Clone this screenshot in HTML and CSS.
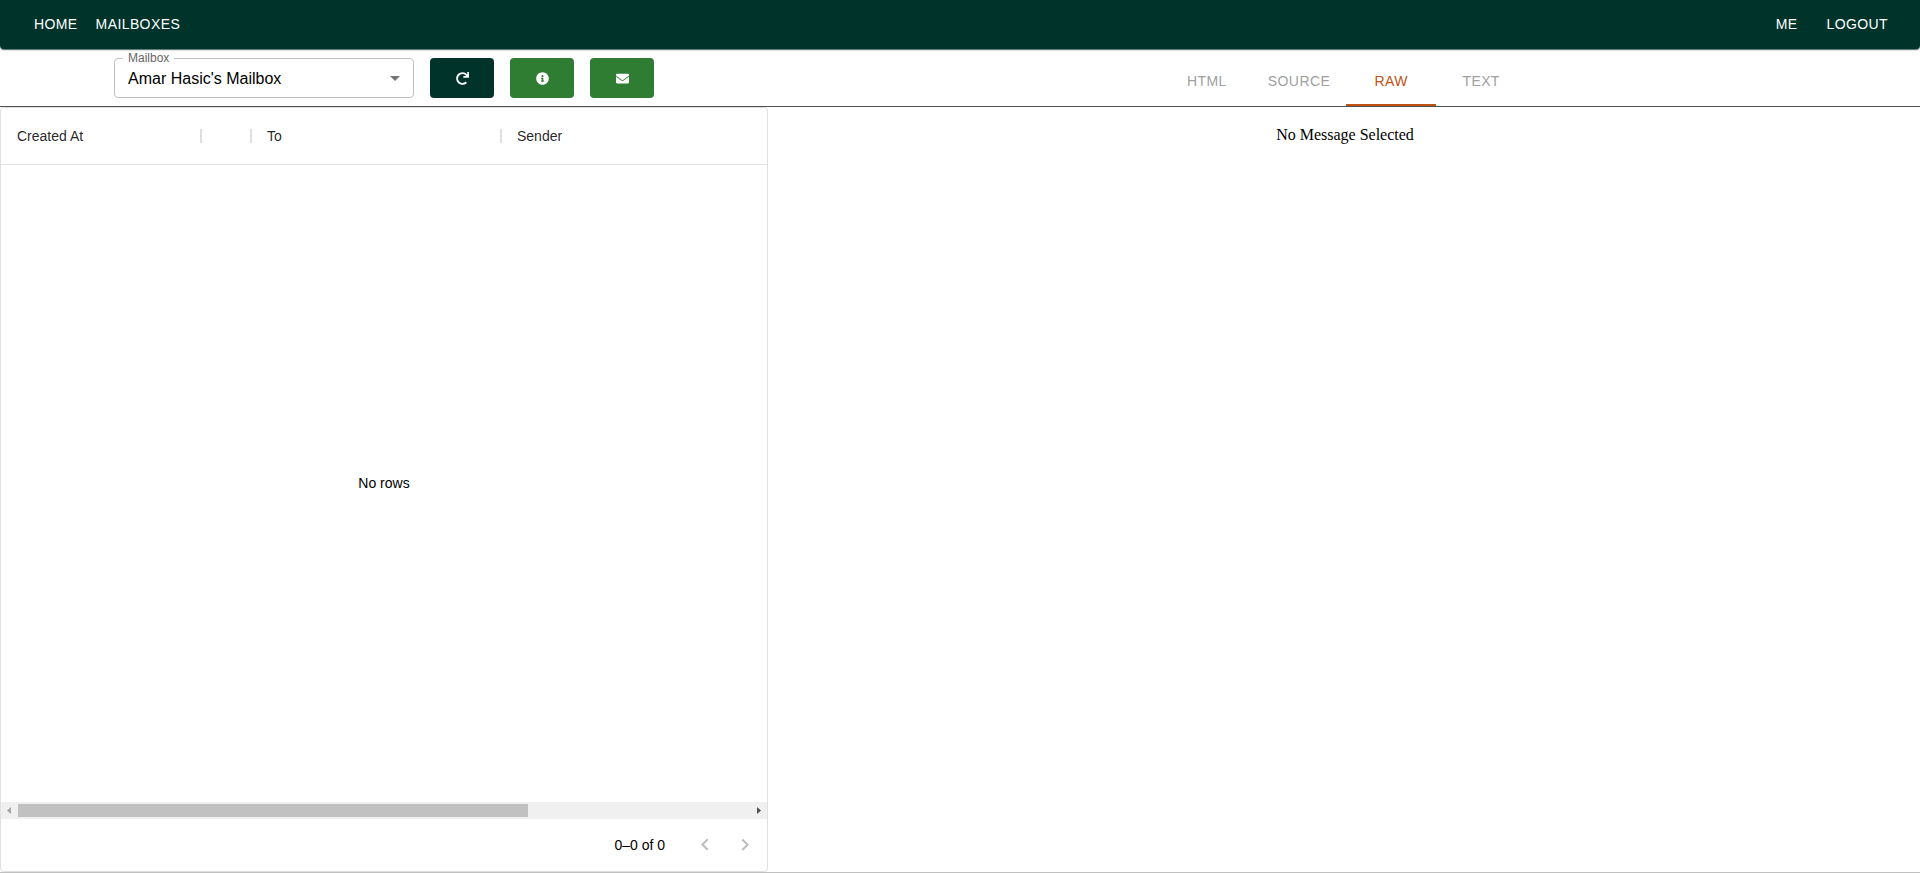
FILE: index.html
```html
<!DOCTYPE html>
<html lang="en">
<head>
<meta charset="utf-8">
<title>Mailboxes</title>
<link rel="stylesheet" href="styles.css">
</head>
<body>
<div class="page">
  <header class="appbar">
    <nav class="nav nav-main">
      <a href="#home">HOME</a>
      <a href="#mailboxes">MAILBOXES</a>
    </nav>
    <nav class="nav nav-user">
      <a href="#me">ME</a>
      <a href="#logout">LOGOUT</a>
    </nav>
  </header>

  <div class="toolbar">
    <div class="mailbox-tools">
      <div class="field">
        <select id="mailbox" class="field-select">
          <option>Amar Hasic's Mailbox</option>
        </select>
        <label class="field-label" for="mailbox">Mailbox</label>
        <svg class="field-arrow" viewBox="0 0 24 24" aria-hidden="true"><path d="M7 10l5 5 5-5z"/></svg>
      </div>
      <button class="tool tool-dark" type="button" aria-label="Refresh">
        <svg viewBox="0 0 512 512"><path d="M500.33 0h-47.41a12 12 0 0 0-12 12.57l4 82.76A247.42 247.42 0 0 0 256 8C119.34 8 7.9 119.53 8 256.19 8.1 393.07 119.1 504 256 504a247.1 247.1 0 0 0 166.18-63.91 12 12 0 0 0 .48-17.43l-34-34a12 12 0 0 0-16.38-.55A176 176 0 1 1 402.1 157.8l-101.53-4.87a12 12 0 0 0-12.57 12v47.41a12 12 0 0 0 12 12h200.33a12 12 0 0 0 12-12V12a12 12 0 0 0-12-12z"/></svg>
      </button>
      <button class="tool" type="button" aria-label="Mailbox information">
        <svg viewBox="0 0 512 512"><path d="M256 8C119.043 8 8 119.083 8 256c0 136.997 111.043 248 248 248s248-111.003 248-248C504 119.083 392.957 8 256 8zm0 110c23.196 0 42 18.804 42 42s-18.804 42-42 42-42-18.804-42-42 18.804-42 42-42zm56 254c0 6.627-5.373 12-12 12h-88c-6.627 0-12-5.373-12-12v-24c0-6.627 5.373-12 12-12h12v-64h-12c-6.627 0-12-5.373-12-12v-24c0-6.627 5.373-12 12-12h64c6.627 0 12 5.373 12 12v100h12c6.627 0 12 5.373 12 12v24z"/></svg>
      </button>
      <button class="tool" type="button" aria-label="Send message">
        <svg viewBox="0 0 512 512"><path d="M502.3 190.8c3.9-3.1 9.7-.2 9.7 4.7V400c0 26.5-21.5 48-48 48H48c-26.5 0-48-21.5-48-48V195.6c0-5 5.7-7.8 9.7-4.7 22.4 17.4 52.1 39.5 154.1 113.6 21.1 15.4 56.7 47.8 92.2 47.6 35.7.3 72-32.8 92.3-47.6 102-74.1 131.6-96.3 154-113.7zM256 320c23.2.4 56.6-29.2 73.4-41.4 132.7-96.3 142.8-104.7 173.4-128.7 5.8-4.5 9.2-11.5 9.2-18.9v-19c0-26.5-21.5-48-48-48H48c-26.5 0-48 21.5-48 48v19c0 7.4 3.4 14.3 9.2 18.9 30.6 23.9 40.7 32.4 173.4 128.7 16.8 12.2 50.2 41.8 73.4 41.4z"/></svg>
      </button>
    </div>
    <div class="tabs" role="tablist">
      <button class="tab" type="button" role="tab">HTML</button>
      <button class="tab" type="button" role="tab">SOURCE</button>
      <button class="tab tab-active" type="button" role="tab" aria-selected="true">RAW</button>
      <button class="tab" type="button" role="tab">TEXT</button>
    </div>
  </div>

  <main class="content">
    <section class="grid">
      <div class="grid-head">
        <table class="grid-table">
          <colgroup><col class="col-date"><col class="col-icon"><col class="col-to"><col></colgroup>
          <thead>
            <tr><th>Created At</th><th></th><th>To</th><th>Sender</th></tr>
          </thead>
        </table>
      </div>
      <div class="grid-empty">No rows</div>
      <div class="scrollbar" aria-hidden="true">
        <svg class="scroll-arrow scroll-arrow-off" viewBox="0 0 17 17"><path d="M10 5v7L6 8.500z"/></svg>
        <div class="scroll-track"><div class="scroll-thumb"></div></div>
        <svg class="scroll-arrow" viewBox="0 0 17 17"><path d="M7 5v7l4-3.500z"/></svg>
      </div>
      <footer class="pager">
        <span class="pager-text">0–0 of 0</span>
        <button class="pager-button" type="button" aria-label="Previous page" disabled>
          <svg viewBox="0 0 24 24"><path d="M15.410 16.090l-4.580-4.590 4.580-4.590L14 5.500l-6 6 6 6z"/></svg>
        </button>
        <button class="pager-button" type="button" aria-label="Next page" disabled>
          <svg viewBox="0 0 24 24"><path d="M8.590 16.340l4.580-4.590-4.580-4.590L10 5.750l6 6-6 6z"/></svg>
        </button>
      </footer>
    </section>
    <section class="message">No Message Selected</section>
  </main>
</div>
</body>
</html>
```
FILE: styles.css
```css
* {
  box-sizing: border-box;
}

body {
  margin: 0;
  background: #fff;
  color: #000;
  font-family: "Liberation Sans", Arial, sans-serif;
  font-size: 14px;
}

button {
  border: 0;
  padding: 0;
  background: none;
  font: inherit;
  cursor: pointer;
}

svg {
  display: block;
  fill: currentColor;
}

.page {
  display: flex;
  flex-direction: column;
  min-height: 100vh;
}

/* Top bar */
.appbar {
  display: flex;
  justify-content: space-between;
  align-items: center;
  height: 49px;
  padding: 0 32px 2px 34px;
  background: #00342b;
  border-radius: 0 0 4px 4px;
  box-shadow: 0 2px 1px -1px rgba(0, 52, 43, 0.4), 0 1px 1px rgba(0, 52, 43, 0.4), 0 1px 3px rgba(0, 0, 0, 0.12);
}

.nav {
  display: flex;
  letter-spacing: 0.02857em;
}

.nav-main {
  gap: 18px;
}

.nav-user {
  gap: 29px;
}

.nav a {
  color: #fff;
  text-decoration: none;
}

/* Mailbox picker, actions and view tabs */
.toolbar {
  display: flex;
  height: 58px;
  border-bottom: 1px solid #505050;
}

.mailbox-tools {
  display: flex;
  justify-content: center;
  align-items: flex-end;
  gap: 16px;
  width: 40%;
  padding-bottom: 8px;
}

.field {
  position: relative;
  width: 300px;
}

.field-select {
  display: block;
  width: 100%;
  height: 40px;
  padding: 0 32px 0 13px;
  border: 1px solid #c0c0c0;
  border-radius: 4px;
  background: #fff;
  color: #000;
  font: inherit;
  font-size: 16px;
  appearance: none;
}

.field-label {
  position: absolute;
  left: 9px;
  top: -6px;
  padding: 0 5px;
  background: #fff;
  color: #666;
  font-size: 12px;
  line-height: 12px;
}

.field-arrow {
  position: absolute;
  right: 7px;
  top: 8px;
  width: 24px;
  height: 24px;
  fill: #757575;
  pointer-events: none;
}

.tool {
  display: flex;
  justify-content: center;
  align-items: center;
  width: 64px;
  height: 40px;
  border-radius: 4px;
  background: #2e7d32;
  color: #fff;
}

.tool-dark {
  background: #00342b;
}

.tool svg {
  width: 13px;
  height: 13px;
}

.tabs {
  display: flex;
  flex: 1;
  justify-content: center;
  align-items: flex-end;
}

.tab {
  min-width: 90px;
  height: 48px;
  padding: 0 16px;
  border-bottom: 2px solid transparent;
  color: #a0a0a0;
  letter-spacing: 0.02857em;
}

.tab-active {
  border-bottom-color: #bf5316;
  color: #bf5316;
}

/* Message list and viewer */
.content {
  display: flex;
  flex: 1;
  border-bottom: 1px solid #c0c0c0;
}

.grid {
  display: flex;
  flex-direction: column;
  width: 40%;
  border: 1px solid #e0e0e0;
  border-radius: 4px;
}

.grid-head {
  overflow: hidden;
  border-bottom: 1px solid #e0e0e0;
}

.grid-table {
  width: 1100px;
  table-layout: fixed;
  border-collapse: collapse;
}

.grid-table th {
  height: 56px;
  padding: 0 15px;
  background: linear-gradient(#e0e0e0, #e0e0e0) right center / 2px 14px no-repeat;
  color: rgba(0, 0, 0, 0.87);
  font-weight: 400;
  text-align: left;
}

.grid-table th:first-child {
  padding-left: 16px;
}

.col-date {
  width: 201px;
}

.col-icon {
  width: 50px;
}

.col-to {
  width: 250px;
}

.grid-empty {
  display: flex;
  flex: 1;
  justify-content: center;
  align-items: center;
  padding-bottom: 2px;
}

.scrollbar {
  display: flex;
  align-items: center;
  height: 17px;
  background: #f0f0f0;
}

.scroll-arrow {
  width: 17px;
  height: 17px;
  fill: #505050;
}

.scroll-arrow-off {
  fill: #a3a3a3;
}

.scroll-track {
  flex: 1;
}

.scroll-thumb {
  width: 69.7%;
  height: 13px;
  background: #c1c1c1;
}

.pager {
  display: flex;
  justify-content: flex-end;
  align-items: center;
  height: 52px;
  padding-right: 2px;
}

.pager-text {
  margin-right: 20px;
}

.pager-button {
  display: flex;
  justify-content: center;
  align-items: center;
  width: 40px;
  height: 40px;
  color: #bdbdbd;
}

.pager-button svg {
  width: 24px;
  height: 24px;
}

.message {
  flex: 1;
  padding: 16px 14px 16px 16px;
  font-family: "Liberation Serif", "Times New Roman", serif;
  font-size: 16px;
  line-height: 24px;
  text-align: center;
}
```
